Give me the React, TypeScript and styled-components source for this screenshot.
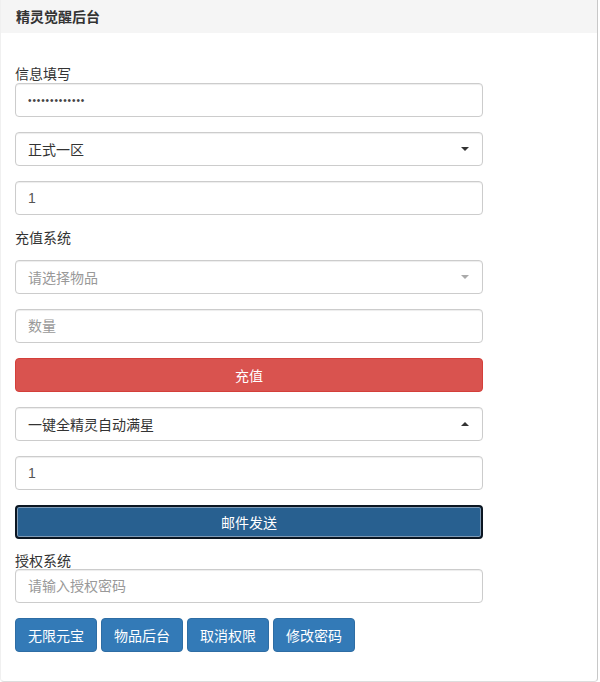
import React from 'react'
import styled, {createGlobalStyle} from 'styled-components'

const GlobalStyle = createGlobalStyle`
    html, body {
        margin: 0;
        padding: 0;
        background: #fff;
    }
    body {
        font-family: "Liberation Sans", "Noto Sans CJK SC", sans-serif;
        font-size: 14px;
        color: #333;
    }
    * {
        box-sizing: border-box;
    }
`

const Panel = styled.div`
    width: 598px;
    min-height: 682px;
    border: 1px solid #ddd;
    border-left-color: #f0f0f0;
    border-right-color: #c8c8c8;
    border-top: none;
    border-radius: 0 0 4px 4px;
    background: #fff;
`

const PanelHeading = styled.div`
    height: 33px;
    display: flex;
    align-items: center;
    padding: 0 15px;
    background: #f5f5f5;
`

const PanelTitle = styled.h3`
    margin: 0;
    font-size: 14px;
    font-weight: 700;
    line-height: 1;
    color: #333;
`

const PanelBody = styled.div`
    padding: 33px 15px 15px 14px;
    width: 497px;
    display: flex;
    flex-direction: column;
`

const Label = styled.label<{$after: number}>`
    display: block;
    font-size: 14px;
    line-height: 16px;
    height: 16px;
    margin-bottom: ${p => p.$after}px;
    color: #333;
`

const Input = styled.input<{$after?: number}>`
    display: block;
    width: 100%;
    height: 34px;
    padding: 6px 12px;
    margin: 0 0 ${p => p.$after ?? 15}px;
    font-family: inherit;
    font-size: 14px;
    color: #555;
    background: #fff;
    border: 1px solid #ccc;
    border-radius: 4px;
    box-shadow: inset 0 1px 1px rgba(0, 0, 0, .075);
    outline: none;

    &::placeholder {
        color: #999;
    }

    &[type='password'] {
        font-size: 10px;
        letter-spacing: 0.9px;
        color: #444;
    }
`

const SelectBox = styled.div<{$placeholder?: boolean, $open?: boolean}>`
    position: relative;
    height: 34px;
    margin-bottom: 15px;
    padding: 0 12px;
    display: flex;
    align-items: center;
    font-size: 14px;
    color: ${p => p.$placeholder ? '#999' : '#333'};
    background: #fff;
    border: 1px solid #ccc;
    border-radius: 4px;
    box-shadow: inset 0 1px 1px rgba(0, 0, 0, .075);

    &::after {
        content: '';
        position: absolute;
        right: 13px;
        top: 50%;
        margin-top: -2px;
        border-left: 4px solid transparent;
        border-right: 4px solid transparent;
        ${p => p.$open
            ? 'border-bottom: 4px solid #333;'
            : `border-top: 4px solid ${p.$placeholder ? '#aaa' : '#333'};`}
    }
`

const BlockButton = styled.button<{$variant: 'danger' | 'primary', $focused?: boolean, $after: number}>`
    display: block;
    width: 100%;
    height: 34px;
    margin: 0 0 ${p => p.$after}px;
    font-family: inherit;
    font-size: 14px;
    color: #fff;
    border-radius: 4px;
    cursor: pointer;
    background: ${p => p.$variant === 'danger' ? '#d9534f' : '#286090'};
    border: 1px solid ${p => p.$variant === 'danger' ? '#d43f3a' : '#122b40'};
    ${p => p.$focused && `
        border: 2px solid #0b1622;
        box-shadow: inset 0 0 0 1px #7f9bb6;
    `}
`

const ButtonRow = styled.div`
    display: flex;
    gap: 4px;
`

const SmallButton = styled.button`
    height: 34px;
    width: 82px;
    padding: 0;
    font-family: inherit;
    font-size: 14px;
    color: #fff;
    background: #337ab7;
    border: 1px solid #2e6da4;
    border-radius: 4px;
    cursor: pointer;
`

const actions = ['无限元宝', '物品后台', '取消权限', '修改密码']

export default function App() {
    return (
        <>
            <GlobalStyle/>
            <Panel>
                <PanelHeading>
                    <PanelTitle>精灵觉醒后台</PanelTitle>
                </PanelHeading>
                <PanelBody>
                    <Label $after={1}>信息填写</Label>
                    <Input type='password' defaultValue='1234567890123' readOnly/>
                    <SelectBox>正式一区</SelectBox>
                    <Input defaultValue='1'/>

                    <Label $after={14}>充值系统</Label>
                    <SelectBox $placeholder>请选择物品</SelectBox>
                    <Input placeholder='数量'/>
                    <BlockButton $variant='danger' $after={15}>充值</BlockButton>
                    <SelectBox $open>一键全精灵自动满星</SelectBox>
                    <Input defaultValue='1'/>
                    <BlockButton $variant='primary' $focused $after={14}>邮件发送</BlockButton>

                    <Label $after={0}>授权系统</Label>
                    <Input placeholder='请输入授权密码'/>
                    <ButtonRow>
                        {actions.map(a => <SmallButton key={a}>{a}</SmallButton>)}
                    </ButtonRow>
                </PanelBody>
            </Panel>
        </>
    )
}
